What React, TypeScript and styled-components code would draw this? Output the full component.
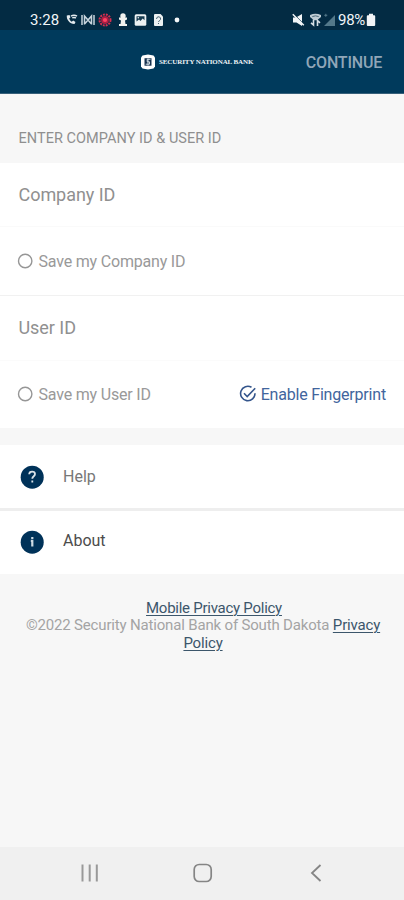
import React from "react";
import styled, { createGlobalStyle } from "styled-components";

const GlobalStyle = createGlobalStyle`
  * { box-sizing: border-box; }
  body { margin: 0; background: #f7f7f7; font-family: Roboto, "Liberation Sans", sans-serif; }
`;

const Screen = styled.main`
  width: 404px;
  height: 900px;
  display: flex;
  flex-direction: column;
  overflow: hidden;
  background: #f7f7f7;
`;

const StatusBar = styled.div`
  height: 30px;
  flex: none;
  display: flex;
  justify-content: space-between;
  align-items: center;
  padding: 9px 28px 0 30px;
  background: #032b43;
  color: #f2f5f7;
`;

const StatusGroup = styled.div`
  display: flex;
  align-items: center;
  height: 20px;
`;

const StatusText = styled.span<{ $tracking: number; $left?: number }>`
  margin-left: ${(p) => p.$left ?? 0}px;
  font-size: 15px;
  line-height: 20px;
  letter-spacing: ${(p) => p.$tracking}px;
`;

const Icon = styled.svg<{ $left?: number }>`
  display: block;
  flex: none;
  margin-left: ${(p) => p.$left ?? 0}px;
`;

const Header = styled.header`
  height: 64px;
  flex: none;
  display: grid;
  grid-template-columns: 141px 1fr auto;
  align-items: center;
  padding-right: 22px;
  background: #003a5c;
  border-bottom: 1px solid #37607a;
`;

const Brand = styled.div`
  grid-column: 2;
  display: flex;
  align-items: center;
  gap: 4px;
  height: 20px;
`;

const BrandName = styled.span`
  font: bold 7px/10px "Liberation Serif", serif;
  letter-spacing: -0.1px;
  color: #eef3f6;
  white-space: nowrap;
`;

const ContinueButton = styled.button`
  border: 0;
  padding: 2px 0 0;
  background: none;
  font: 500 16px/20px Roboto, sans-serif;
  letter-spacing: -0.2px;
  color: #90a6b8;
`;

const SectionTitle = styled.h2`
  margin: 0;
  height: 69px;
  flex: none;
  padding: 35px 18.5px 0;
  font-size: 14.5px;
  font-weight: 400;
  line-height: 20px;
  letter-spacing: 0.04px;
  color: #8f8f8f;
`;

const FormRow = styled.div<{ $height: number; $line?: string }>`
  height: ${(p) => p.$height}px;
  flex: none;
  display: flex;
  align-items: center;
  justify-content: space-between;
  padding: 0 18px 0 18.5px;
  background: #fff;
  border-bottom: 1px solid ${(p) => p.$line ?? "#fff"};
`;

const FieldLabel = styled.label`
  font-size: 18px;
  line-height: 22px;
  letter-spacing: -0.05px;
  color: #909090;
`;

const Option = styled.div<{ $accent?: boolean }>`
  display: flex;
  align-items: center;
  gap: ${(p) => (p.$accent ? 4 : 5)}px;
  margin-left: -2px;
  font-size: 16px;
  line-height: 20px;
  letter-spacing: -0.19px;
  color: ${(p) => (p.$accent ? "#41659d" : "#999")};
  white-space: nowrap;
`;

const OptionLabel = styled.span`
  padding-top: 2px;
`;

const Menu = styled.nav`
  flex: none;
  margin-top: 17px;
  display: grid;
  gap: 3px;
  background: #eee;
`;

const MenuItem = styled.a<{ $color: string; $bottom?: number }>`
  height: 63px;
  display: flex;
  align-items: center;
  gap: 19px;
  padding: 0 20px ${(p) => p.$bottom ?? 0}px;
  background: #fff;
  color: ${(p) => p.$color};
  font-size: 16px;
  line-height: 20px;
`;

const MenuLabel = styled.span<{ $bottom: number }>`
  padding-bottom: ${(p) => p.$bottom}px;
`;

const Footer = styled.footer`
  flex: 1;
  padding: 26px 0 0;
  text-align: center;
  font-size: 15px;
  line-height: 17.4px;
  color: #a4a4a4;
`;

const FooterLine = styled.div<{ $tracking: number; $shift?: number }>`
  letter-spacing: ${(p) => p.$tracking}px;
  padding-left: ${(p) => p.$shift ?? 0}px;
  white-space: nowrap;
`;

const Link = styled.a`
  color: #3c566b;
  text-decoration: underline;
  text-decoration-thickness: 1px;
  text-underline-offset: 2px;
`;

const SystemNav = styled.div`
  height: 53px;
  flex: none;
  display: grid;
  grid-template-columns: 113px 117px 13px;
  align-items: center;
  padding: 0 0 2px 80px;
  background: #f0f0f0;
`;

const Radio = () => (
  <Icon width="17" height="17" viewBox="0 0 17 17">
    <circle cx="8.2" cy="8" r="6.7" fill="none" stroke="#969696" strokeWidth="1.4" />
  </Icon>
);

const NotificationIcons = () => (
  <>
    <Icon width="14" height="14" viewBox="0 0 14 14" $left={6} fill="none" stroke="#e4eaee">
      <path d="M1.8 2.6c-.5 4.4 3.3 8.6 7.7 8.4l1-2-2.3-1.4-1.5 1.1C5.2 7.7 4.6 6.7 4.2 5.5l1.3-1.2L4.5 2.1z" fill="#e4eaee" stroke="none" />
      <path d="M6 3.2q3-2 6 0M7.2 5q1.8-1.2 3.7 0" strokeWidth="1.5" />
    </Icon>
    <Icon width="14" height="14" viewBox="0 0 14 14" $left={2} fill="none" stroke="#c8d4dc" strokeWidth="1.5">
      <path d="M1 2v10M3.5 11.5V3L7 7l3.5-4v8.5M13 2v10M4 10.5 7 7l3 3.5" />
    </Icon>
    <Icon width="14" height="14" viewBox="0 0 14 14" $left={3}>
      <circle cx="7" cy="7" r="5.5" fill="none" stroke="#d52f50" strokeWidth="2" strokeDasharray="1.9 1" />
      <circle cx="7" cy="7" r="3.9" fill="#ad1e42" />
      <circle cx="7" cy="7" r="2.1" fill="#ff4263" />
    </Icon>
    <Icon width="10" height="14" viewBox="0 0 10 14" $left={6} fill="#f2f2ef">
      <circle cx="5" cy="3" r="2.7" />
      <path d="M1 4.5h8v2L7 7.5l.5 3.5H9v2H1v-2h1.5L3 7.5l-2-1z" />
    </Icon>
    <Icon width="13" height="14" viewBox="0 0 13 14" $left={6}>
      <rect x=".7" y="1.3" width="11.6" height="11.4" rx="1.5" fill="#edf1f2" />
      <path d="M2.5 3.2h8v4L8.7 5.5 6.5 8 5 6.5l-2.5 2z" fill="#173b50" />
      <circle cx="4.3" cy="4.7" r=".8" fill="#edf1f2" />
    </Icon>
    <Icon width="11" height="14" viewBox="0 0 11 14" $left={6}>
      <path d="M2 1h5.5L10 3.5V12q0 1-1 1H2q-1 0-1-1V2q0-1 1-1z" fill="#edf1f2" />
      <path d="M3.6 6a2 2 0 1 1 3 1.5q-1 .6-1 1.5M5.5 10v1" fill="none" stroke="#48616f" strokeWidth="1" />
    </Icon>
    <Icon width="6" height="6" viewBox="0 0 6 6" $left={10}>
      <circle cx="3" cy="3" r="2.4" fill="#f5f7f8" />
    </Icon>
  </>
);

export default function App() {
  return (
    <>
      <GlobalStyle />
      <Screen>
        <StatusBar>
          <StatusGroup>
            <StatusText $tracking={0.1}>3:28</StatusText>
            <NotificationIcons />
          </StatusGroup>
          <StatusGroup>
            <Icon width="13" height="14" viewBox="0 0 13 14">
              <path d="M1 4.5h3L10 1v12L4.5 9.5H1z" fill="#f2f5f7" />
              <path d="m1.5.8 11 11" stroke="#032b43" strokeWidth="1" />
              <path d="m.8 1.2 11 11" stroke="#f2f5f7" strokeWidth="1.5" />
            </Icon>
            <Icon width="13" height="14" viewBox="0 0 13 14" $left={4}>
              <path d="M1 2q5.5-2.600 11 0v2L8 7.2H5L1 4z" fill="#bdcbd3" />
              <path d="M3.3 3.6q3.2-1.5 6.4 0" fill="none" stroke="#4d6978" />
              <path d="M4.5 6.5V12L2 9.800M8.500 13V7.500L11 9.800" fill="none" stroke="#d7e0e5" strokeWidth="1.6" />
            </Icon>
            <Icon width="13" height="14" viewBox="0 0 13 14" $left={1}>
              <path d="M1 13 12 2v11z" fill="#54798a" />
              <path d="M1.3 2.3h3M2.8.8v3" stroke="#54798a" />
            </Icon>
            <StatusText $tracking={-0.3} $left={2}>98%</StatusText>
            <Icon width="10" height="14" viewBox="0 0 10 14" $left={1}>
              <path d="M3 .8h4v1.5h1.2q1 0 1 1V12q0 1-1 1H1.8q-1 0-1-1V3.3q0-1 1-1H3z" fill="#f2f5f7" />
            </Icon>
          </StatusGroup>
        </StatusBar>
        <Header>
          <Brand>
            <Icon width="14" height="16" viewBox="0 0 14 16">
              <path d="m7 .5 5.5 1L14 3.5v9l-1.5 2-5.5 1-5.5-1-1.5-2v-9l1.5-2z" fill="#fff" />
              <path d="M3.5 4.2h7v7.5h-7z" fill="#17324f" />
              <path d="M9.5 5.3H6.2v2.5h2.3v2.4H4.7M7 4.5v7" fill="none" stroke="#dce7ec" strokeWidth=".9" />
            </Icon>
            <BrandName>SECURITY NATIONAL BANK</BrandName>
          </Brand>
          <ContinueButton>CONTINUE</ContinueButton>
        </Header>
        <SectionTitle>ENTER COMPANY ID &amp; USER ID</SectionTitle>
        <FormRow $height={64} $line="#fafafa"><FieldLabel>Company ID</FieldLabel></FormRow>
        <FormRow $height={69} $line="#f1f1f1"><Option><Radio /><OptionLabel>Save my Company ID</OptionLabel></Option></FormRow>
        <FormRow $height={65} $line="#fbfbfb"><FieldLabel>User ID</FieldLabel></FormRow>
        <FormRow $height={67}>
          <Option><Radio /><OptionLabel>Save my User ID</OptionLabel></Option>
          <Option $accent>
            <Icon width="18" height="18" viewBox="0 0 18 18" fill="none" stroke="#34558c" strokeWidth="1.6">
              <path d="M12.5 2.3A7.2 7.2 0 1 0 16 8.2M5 8.3l3.2 3.3 8-8.3" />
            </Icon>
            <OptionLabel>Enable Fingerprint</OptionLabel>
          </Option>
        </FormRow>
        <Menu>
          <MenuItem $color="#777">
            <Icon width="24" height="24" viewBox="0 0 24 24">
              <circle cx="12.2" cy="12.2" r="11.5" fill="#003259" />
              <path d="M9.2 9.3q.1-2.600 2.900-2.600t2.900 2.300q0 1.300-1.500 2.400-1.200.9-1.200 2.400M12.300 15.500v2" fill="none" stroke="#dce5eb" strokeWidth="1.8" />
            </Icon>
            <MenuLabel $bottom={0}>Help</MenuLabel>
          </MenuItem>
          <MenuItem $color="#4c4c4c" $bottom={2}>
            <Icon width="24" height="24" viewBox="0 0 24 24">
              <circle cx="12.2" cy="12.2" r="11.5" fill="#003259" />
              <path d="M12.3 7v2M10.8 10.8h1.5v5.7" fill="none" stroke="#cedbe3" strokeWidth="2.2" />
            </Icon>
            <MenuLabel $bottom={2}>About</MenuLabel>
          </MenuItem>
        </Menu>
        <Footer>
          <FooterLine $tracking={-0.26} $shift={24}><Link>Mobile Privacy Policy</Link></FooterLine>
          <FooterLine $tracking={-0.17} $shift={2}>©2022 Security National Bank of South Dakota <Link>Privacy</Link></FooterLine>
          <FooterLine $tracking={-0.17} $shift={2}><Link>Policy</Link></FooterLine>
        </Footer>
        <SystemNav>
          <Icon width="20" height="20" viewBox="0 0 20 20">
            <path d="M2.5 1.5v17M9.7 1.5v17M16.800 1.500v17" stroke="#999" strokeWidth="2" />
          </Icon>
          <Icon width="20" height="20" viewBox="0 0 20 20">
            <rect x="1.2" y="1.5" width="17" height="17" rx="5" fill="none" stroke="#858585" strokeWidth="1.7" />
          </Icon>
          <Icon width="13" height="20" viewBox="0 0 13 20">
            <path d="m10.5 2-8.5 8 8.5 8" fill="none" stroke="#858585" strokeWidth="1.8" />
          </Icon>
        </SystemNav>
      </Screen>
    </>
  );
}
